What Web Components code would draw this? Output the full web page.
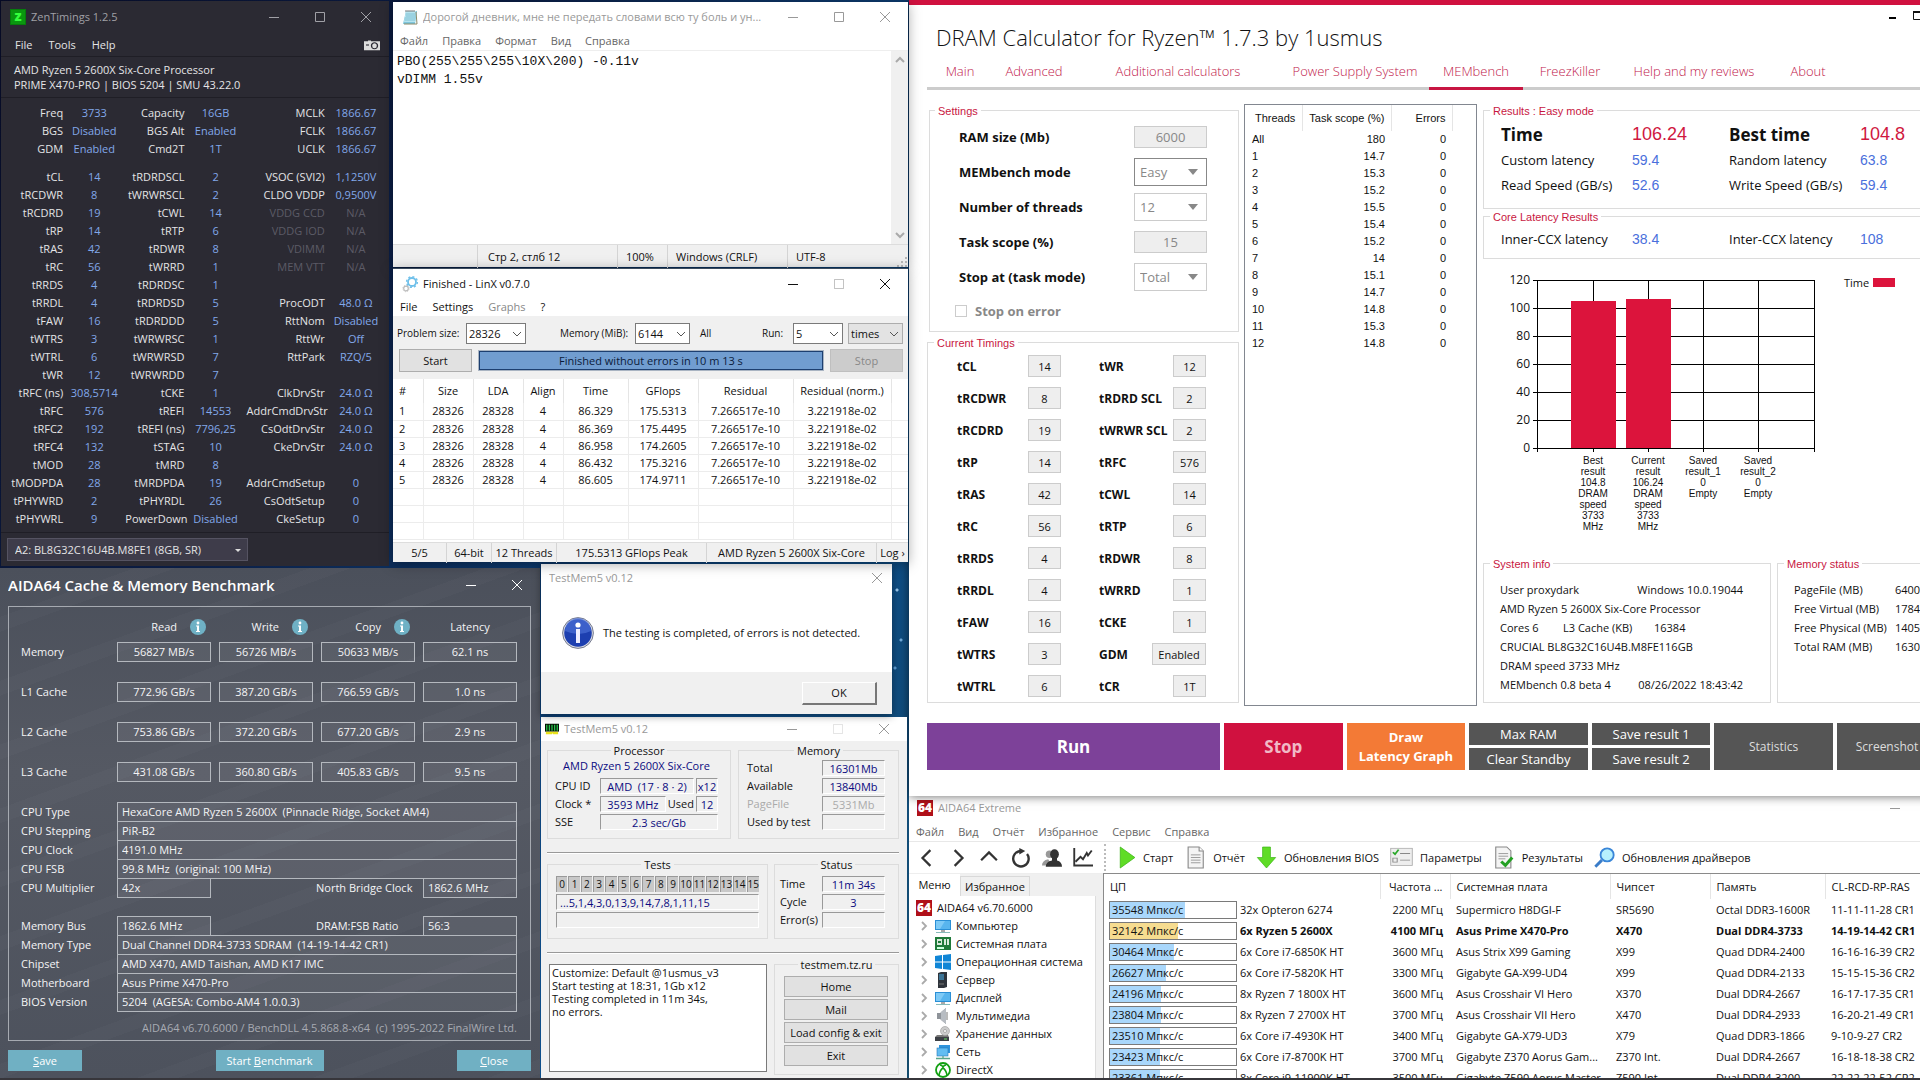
<!DOCTYPE html>
<html lang="ru">
<head>
<meta charset="utf-8">
<title>Desktop</title>
<style>
    html, body {
        height: 100%;
        margin: 0;
        overflow: hidden;
    }

    body {
        font: 11px/16px "Open Sans", "Noto Sans", sans-serif;
        color: #111;
    }
</style>
</head>
<body>
<desk-top>
    <zen-timings></zen-timings>
    <aida-extreme></aida-extreme>
    <dram-calculator></dram-calculator>
    <cache-benchmark></cache-benchmark>
    <note-pad></note-pad>
    <test-mem></test-mem>
    <test-dialog></test-dialog>
    <linx-window></linx-window>
</desk-top>

<script>
const RESET = `
    *, *::before, *::after { box-sizing: border-box; }
    button, input, select, textarea {
        font: inherit;
        color: inherit;
        margin: 0;
        padding: 0;
        border: 0;
        border-radius: 0;
        background: none;
        outline: none;
    }
    table { border-collapse: collapse; table-layout: fixed; }
    th, td { padding: 0; font-weight: inherit; text-align: inherit; white-space: nowrap; }
    svg { display: block; flex: none; overflow: visible; }
`;

const ICONS = {
    zen: '<rect width="16" height="16" fill="#067d0c"/><rect x="1" y="1" width="14" height="14" fill="#0a970f"/><text x="8" y="12" text-anchor="middle" font-size="14" font-weight="800" fill="#35ff3c">z</text>',
    camera: '<path d="M0 3h4V2h3v1h9v12H0z" fill="#ddd"/><ellipse cx="10.500" cy="9" rx="3" ry="4" fill="none" stroke="#2b2a33" stroke-width="1.300"/><path d="M2 8h3" stroke="#2b2a33" stroke-width="1.500"/>',
    notepad: '<path d="M4 2h11l-2 13H1z" fill="#7fc6dc"/><path d="M4 2h10l-1 11H2z" fill="#b6e4ef"/><path d="M4 5h9M4 7h9M3 9h10M3 11h10" stroke="#6cb2c8" stroke-width=".7"/><path d="M4 1v2M6 1v2M8 1v2M10 1v2M12 1v2" stroke="#777"/><path d="M14 3l1 12H2" fill="none" stroke="#8a8a6a"/>',
    gears: '<circle cx="10" cy="6" r="4" fill="none" stroke="#6fc0ea" stroke-width="1.8"/><circle cx="10" cy="6" r="5.4" fill="none" stroke="#6fc0ea" stroke-width="1.4" stroke-dasharray="2 2.2"/><circle cx="4" cy="12.500" r="2.300" fill="none" stroke="#bbb" stroke-width="1.200"/><circle cx="4" cy="12.500" r="3.200" fill="none" stroke="#bbb" stroke-width=".8" stroke-dasharray="1.200 1.300"/>',
    memory: '<path d="M0 2h16v9H0z" fill="#041004"/><path d="M2 3v7M5 3v7M8 3v7M11 3v7M14 3v7" stroke="#27c04b" stroke-width="1.500"/><path d="M1 11h14v3H9v-1H8v1H1z" fill="#e9e21b"/>',
    info: '<circle cx="8" cy="8" r="7.700" fill="#d9dbe4" stroke="#777c90" stroke-width=".5"/><circle cx="8" cy="8" r="6.900" fill="#1d3fb0"/><path d="M1.500 7a6.500 6.500 0 0 1 13 0q-6 3-13 0z" fill="#4a6fd6" opacity=".7"/><circle cx="8" cy="4" r="1.300" fill="#fff"/><rect x="7" y="6" width="2" height="7" fill="#eef"/>',
    hint: '<circle cx="8" cy="8" r="8" fill="#6fb1c5"/><circle cx="8" cy="4" r="1.400" fill="#fff"/><path d="M6 6.500h3V12h1v1H6v-1h1V7.500H6z" fill="#fff"/>',
    aida: '<rect width="16" height="16" fill="#b01019"/><text x="8" y="12" text-anchor="middle" font-size="12" font-weight="800" fill="#fff">64</text>',
    back: '<path d="M11 1L4 8l7 7" fill="none" stroke="#333" stroke-width="2"/>',
    forward: '<path d="M5 1l7 7-7 7" fill="none" stroke="#333" stroke-width="2"/>',
    up: '<path d="M1 10l7-7 7 7" fill="none" stroke="#333" stroke-width="2"/>',
    reload: '<path d="M13.500 5A6.500 6.500 0 1 1 8 2.500" fill="none" stroke="#333" stroke-width="2"/><path d="M7 0l5 2.500-5 3z" fill="#333"/>',
    users: '<circle cx="6" cy="5" r="3" fill="#999"/><path d="M0 14q0-4 5-5l3 5z" fill="#999"/><ellipse cx="10" cy="5" rx="3.500" ry="4" fill="#333"/><path d="M3 15q0-4 5-5V8h4v2q4 1 4 5z" fill="#333"/>',
    graph: '<path d="M1 0v14h15" fill="none" stroke="#333" stroke-width="1.500"/><path d="M2 11l4-4 2 2 3-5 1 2 3-4" fill="none" stroke="#333" stroke-width="1.500"/>',
    play: '<path d="M2 0l13 8-13 8z" fill="#5fdc26" stroke="#38b312" stroke-width=".6"/>',
    page: '<path d="M3 0h8l3 3v13H3z" fill="#f4f4f4" stroke="#888" stroke-width=".8"/><path d="M11 0v3h3" fill="#fff" stroke="#888" stroke-width=".8"/><path d="M5 6h7M5 8h7M5 10h7M5 12h7" stroke="#999" stroke-width=".7"/>',
    download: '<path d="M5 0h6v8h4l-7 8-7-8h4z" fill="#5fdc26" stroke="#38b312" stroke-width=".5"/>',
    options: '<rect x=".5" y="1" width="15" height="13" fill="#eee" stroke="#aaa" stroke-width=".6"/><path d="M2 8.500h3v3H2zM7 5h7M7 10h7" fill="none" stroke="#888" stroke-width=".7"/><path d="M2 4l1.500 1.500L6 2" fill="none" stroke="#2aa82a" stroke-width="1.300"/>',
    results: '<path d="M2 0h8l3 3v13H2z" fill="#f4f4f4" stroke="#888" stroke-width=".8"/><path d="M4 5h7M4 7h7M4 9h5" stroke="#999" stroke-width=".7"/><path d="M6 11l3 3 5-6" fill="none" stroke="#23a023" stroke-width="2.200"/>',
    magnifier: '<path d="M1 15l5-5" stroke="#3a7cc8" stroke-width="2.200"/><circle cx="10" cy="6" r="5" fill="#b7f1fd" stroke="#3a86d8" stroke-width="1.400"/>',
    monitor: '<rect x="0" y="2" width="16" height="10" fill="#2a8fd6"/><path d="M1 3h14v8H1z" fill="#58b5ee"/><path d="M1 3h9l-5 8H1z" fill="#7ecaf6"/><path d="M6 12h4v2H6z" fill="#aaa"/><path d="M1 14.500h14" stroke="#8bb" />',
    board: '<rect y="1" width="16" height="13" fill="#1f7a3a"/><path d="M2 3h5v6H2zM9 3h2v6H9zM12 3h2v6h-2z" fill="#d9eadb"/><path d="M3 5h3v2H3z" fill="#1f7a3a"/><path d="M2 11h7v2H2z" fill="#cfd"/>',
    windows: '<path d="M0 2l7-1v6.500H0zM8 1l8-1v7.500H8zM0 8.500h7V15l-7-1zM8 8.500h8V16l-8-1z" fill="#1086d6"/>',
    server: '<path d="M3 1l3-1h6v15l-3 1H3z" fill="#2f343b"/><path d="M4 3h5M4 5h5M4 7h5" stroke="#4bb3f0"/><path d="M4 12h5" stroke="#777"/>',
    speaker: '<path d="M2 5h3l6-5v16l-6-5H2z" fill="#8f949a"/><path d="M6 4l5-4v16l-5-4z" fill="#b7bcc2"/><path d="M12 4v8" stroke="#777"/>',
    disk: '<path d="M0 11h14v4H0z" fill="#3c4046"/><path d="M2 9h11l1 2H0z" fill="#777"/><circle cx="10" cy="5" r="4.500" fill="#ccc" stroke="#999" stroke-width=".6"/><circle cx="10" cy="5" r="1.500" fill="#fff" stroke="#888" stroke-width=".6"/><path d="M9 13h3" stroke="#6d6"/>',
    network: '<rect x="4" y="1" width="11" height="8" fill="#2f94dc"/><rect x="2" y="4" width="11" height="8" fill="#62bdf2" stroke="#2579b8" stroke-width=".6"/><path d="M1 14.500h14M8 12v2" stroke="#59a58a" stroke-width="1.300"/>',
    directx: '<circle cx="8" cy="8" r="7" fill="#fff" stroke="#12a012" stroke-width="1.800"/><path d="M4 13q1-5 4-7 3 2 4 7M5 3q2 0 3 2 1-2 3-2" fill="none" stroke="#12a012" stroke-width="1.600"/>',
    chevron: '<path d="M6 4l4 4-4 4" fill="none" stroke="#aaa" stroke-width="1.800"/>'
};

const icon = (name, width = 16, height = width) =>
    `<svg width="${width}" height="${height}" viewBox="0 0 16 16" preserveAspectRatio="none" aria-hidden="true">${ICONS[name]}</svg>`;

class BaseElement extends HTMLElement {
    connectedCallback () {
        if (this.shadowRoot) {
            return;
        }
        const template = document.createElement('template');
        template.innerHTML = `<style>${RESET}</style>${this.render()}`;
        this.attachShadow({ mode: 'open' }).appendChild(template.content.cloneNode(true));
    }
}

/* ---------- shared parts ---------- */

class DeskTop extends BaseElement {
    render () {
        return `
            <style>
                :host {
                    display: block;
                    box-sizing: border-box;
                    position: relative;
                    height: 100%;
                    overflow: hidden;
                    background:
                        radial-gradient(circle at 897px 590px, #9cc9ee 1px, transparent 2px),
                        radial-gradient(circle at 901px 640px, #74aede 1px, transparent 2px),
                        radial-gradient(circle at 895px 668px, #5f9fd6 1px, transparent 2px),
                        linear-gradient(120deg, #060a24 0, #0b1d44 20%, #0e4f8c 45%, #1a4a58 70%, #2e3338);
                    border-bottom: 2px solid #37363b;
                }
                /* windows are placed freely on the desktop */
                ::slotted(*) { position: absolute; }
                ::slotted(zen-timings) { left: 1px; top: 1px; width: 388px; }
                ::slotted(note-pad) { left: 393px; top: 2px; width: 515px; height: 265px; }
                ::slotted(linx-window) { left: 393px; top: 268px; width: 515px; }
                ::slotted(cache-benchmark) { left: 0; top: 568px; width: 540px; bottom: 0; }
                ::slotted(test-dialog) { left: 541px; top: 564px; width: 351px; }
                ::slotted(test-mem) { left: 541px; top: 717px; width: 366px; bottom: 0; }
                ::slotted(dram-calculator) { left: 909px; top: 0; right: -35px; height: 791px; }
                ::slotted(aida-extreme) { left: 909px; top: 793px; right: -90px; bottom: 0; }
            </style>
            <slot></slot>
        `;
    }
}

class TitleBar extends BaseElement {
    render () {
        const shapes = {
            min: '<path d="M0 5.500h10"/>',
            max: '<path d="M.5.5h9v9h-9z"/>',
            off: '<path d="M.5.5h9v9h-9z" opacity=".25"/>',
            close: '<path d="M0 0l10 10M10 0L0 10"/>'
        };
        const names = { min: 'Minimize', max: 'Maximize', off: 'Maximize', close: 'Close' };
        const buttons = (this.getAttribute('controls') || 'min max close').split(' ').map(key => `
            <button aria-label="${names[key]}" ${key === 'off' ? 'disabled' : ''}>
                <svg width="10" height="10" fill="none" stroke="currentColor">${shapes[key]}</svg>
            </button>`).join('');
        return `
            <style>
                :host {
                    display: flex;
                    align-items: center;
                    height: 30px;
                    padding-left: 9px;
                    gap: 5px;
                    color: #999;
                }
                span { flex: 1; min-width: 0; white-space: nowrap; overflow: hidden; text-overflow: ellipsis; }
                nav { display: flex; align-self: stretch; color: var(--control-color, inherit); }
                button {
                    width: var(--control-width, 46px);
                    display: grid;
                    place-items: center;
                }
            </style>
            <slot></slot>
            <span>${this.getAttribute('label')}</span>
            <nav>${buttons}</nav>
        `;
    }
}

class MenuBar extends BaseElement {
    render () {
        const off = this.getAttribute('off');
        return `
            <style>
                :host { display: flex; align-items: center; gap: 14px; padding: 0 7px; height: 18px; }
                button { white-space: nowrap; }
                button:disabled { color: #888; }
            </style>
            ${this.getAttribute('items').split('|').map(item =>
                `<button ${item === off ? 'disabled' : ''}>${item}</button>`).join('')}
            <slot></slot>
        `;
    }
}

class GroupBox extends BaseElement {
    render () {
        return `
            <style>
                :host { display: block; }
                fieldset {
                    height: 100%;
                    min-width: 0;
                    margin: 0;
                    padding: 0;
                    border: 1px solid #dcdcdc;
                }
                legend {
                    margin: var(--legend-margin, 0 6px);
                    padding: 1px 3px 0;
                    line-height: 14px;
                    color: var(--legend-color, #111);
                }
            </style>
            <fieldset>
                <legend>${this.getAttribute('label')}</legend>
                <slot></slot>
            </fieldset>
        `;
    }
}

class ComboBox extends BaseElement {
    render () {
        const arrows = {
            solid: '<path d="M0 2h10L5 8z" fill="currentColor"/>',
            tiny: '<path d="M2 4h6L5 7z" fill="currentColor"/>',
            open: '<path d="M1 3l4 4 4-4" fill="none" stroke="currentColor"/>'
        };
        return `
            <style>
                :host {
                    display: grid;
                    align-items: center;
                    border: 1px solid #7a7a7a;
                    background: #fff;
                }
                select, svg { grid-area: 1 / 1; }
                select {
                    appearance: none;
                    width: 100%;
                    height: 100%;
                    min-width: 0;
                    padding-left: var(--combo-indent, 2px);
                    opacity: 1;
                }
                svg {
                    justify-self: end;
                    margin-right: var(--combo-arrow, 3px);
                    color: var(--arrow-color, #555);
                    pointer-events: none;
                }
            </style>
            <select aria-label="${this.getAttribute('label')}" ${this.hasAttribute('disabled') ? 'disabled' : ''}>
                <option>${this.getAttribute('value')}</option>
            </select>
            <svg width="10" height="10" viewBox="0 0 10 10">${arrows[this.getAttribute('arrow') || 'open']}</svg>
        `;
    }
}

/* ---------- ZenTimings ---------- */

class ZenTimings extends BaseElement {
    render () {
        const rows = [
            'Freq|3733|Capacity|16GB|MCLK|1866.67',
            'BGS|Disabled|BGS Alt|Enabled|FCLK|1866.67',
            'GDM|Enabled|Cmd2T|1T|UCLK|1866.67',
            '',
            'tCL|14|tRDRDSCL|2|VSOC (SVI2)|1,1250V',
            'tRCDWR|8|tWRWRSCL|2|CLDO VDDP|0,9500V',
            'tRCDRD|19|tCWL|14|VDDG CCD|N/A',
            'tRP|14|tRTP|6|VDDG IOD|N/A',
            'tRAS|42|tRDWR|8|VDIMM|N/A',
            'tRC|56|tWRRD|1|MEM VTT|N/A',
            'tRRDS|4|tRDRDSC|1||',
            'tRRDL|4|tRDRDSD|5|ProcODT|48.0 Ω',
            'tFAW|16|tRDRDDD|5|RttNom|Disabled',
            'tWTRS|3|tWRWRSC|1|RttWr|Off',
            'tWTRL|6|tWRWRSD|7|RttPark|RZQ/5',
            'tWR|12|tWRWRDD|7||',
            'tRFC (ns)|308,5714|tCKE|1|ClkDrvStr|24.0 Ω',
            'tRFC|576|tREFI|14553|AddrCmdDrvStr|24.0 Ω',
            'tRFC2|192|tREFI (ns)|7796,25|CsOdtDrvStr|24.0 Ω',
            'tRFC4|132|tSTAG|10|CkeDrvStr|24.0 Ω',
            'tMOD|28|tMRD|8||',
            'tMODPDA|28|tMRDPDA|19|AddrCmdSetup|0',
            'tPHYWRD|2|tPHYRDL|26|CsOdtSetup|0',
            'tPHYWRL|9|PowerDown|Disabled|CkeSetup|0'
        ];
        const body = rows.map(row => {
            if (!row) {
                return '<tr class="space"><td colspan="6"></td></tr>';
            }
            const cells = row.split('|');
            return '<tr>' + cells.map((cell, i) => {
                const off = i > 3 && cells[5] === 'N/A' ? ' class="off"' : '';
                return i % 2 ? `<td${off}>${cell}</td>` : `<th${off}>${cell}</th>`;
            }).join('') + '</tr>';
        }).join('');
        return `
            <style>
                :host { display: block; background: #2b2a33; color: #e4e4e6; }
                title-bar { height: 32px; color: #a0a0a6; }
                menu-bar { height: 24px; gap: 16px; padding: 0 9px 0 14px; border-bottom: 1px solid #1f1e26; }
                menu-bar button { margin-left: auto; }
                p { margin: 0; padding: 5px 13px; line-height: 15px; border-bottom: 1px solid #1f1e26; }
                table { width: 386px; margin: 6px 0 4px; }
                td, th { height: 18px; line-height: 18px; }
                th { text-align: right; }
                td { text-align: center; color: #82a8ea; }
                .off { color: #5c5b66; }
                .space td { height: 10px; }
                footer { padding: 5px 6px; border-top: 1px solid #1f1e26; }
                combo-box {
                    width: 241px;
                    height: 23px;
                    background: #3e3c4a;
                    border-color: #555362;
                    --combo-indent: 7px;
                    --combo-arrow: 4px;
                    --arrow-color: #ddd;
                }
            </style>
            <title-bar label="ZenTimings 1.2.5">${icon('zen')}</title-bar>
            <menu-bar items="File|Tools|Help"><button aria-label="Screenshot">${icon('camera', 16, 12)}</button></menu-bar>
            <p>AMD Ryzen 5 2600X Six-Core Processor<br>PRIME X470-PRO | BIOS 5204 | SMU 43.22.0</p>
            <table>
                <colgroup>
                    <col style="width:62px"><col style="width:62px"><col style="width:59px">
                    <col style="width:62px"><col style="width:78px"><col style="width:62px">
                </colgroup>
                ${body}
            </table>
            <footer><combo-box arrow="tiny" label="Module" value="A2: BL8G32C16U4B.M8FE1 (8GB, SR)"></combo-box></footer>
        `;
    }
}

/* ---------- Notepad ---------- */

class NotePad extends BaseElement {
    render () {
        return `
            <style>
                :host { display: flex; flex-direction: column; background: #fff; box-shadow: 0 2px 12px rgba(0, 0, 0, .35); }
                menu-bar { height: 19px; color: #666; border-bottom: 1px solid #eee; }
                main { flex: 1; display: flex; min-height: 0; }
                textarea {
                    flex: 1;
                    resize: none;
                    overflow: hidden;
                    padding: 2px 4px;
                    font: 13px/18px "Liberation Mono", monospace;
                }
                aside {
                    width: 17px;
                    padding: 6px 0;
                    background: #f0f0f0;
                    color: #aaa;
                    display: flex;
                    flex-direction: column;
                    align-items: center;
                    justify-content: space-between;
                }
                footer {
                    display: grid;
                    grid-template-columns: 85px 140px 50px 120px 1fr;
                    height: 23px;
                    line-height: 23px;
                    background: #f0f0f0;
                    border-top: 1px solid #ddd;
                }
                footer span { border-right: 1px solid #d4d4d4; padding-left: 8px; }
                footer span:nth-child(2) { padding-left: 10px; }
                footer span:last-child { border: 0; display: flex; justify-content: space-between; align-items: end; }
            </style>
            <title-bar label="Дорогой дневник, мне не передать словами всю ту боль и ун...">${icon('notepad')}</title-bar>
            <menu-bar items="Файл|Правка|Формат|Вид|Справка"></menu-bar>
            <main>
                <textarea aria-label="Текст" spellcheck="false">PBO(255\\255\\255\\10X\\200) -0.11v
vDIMM 1.55v</textarea>
                <aside>
                    <svg width="8" height="6" fill="none" stroke="currentColor" stroke-width="2"><path d="M0 5l4-4 4 4"/></svg>
                    <svg width="8" height="6" fill="none" stroke="currentColor" stroke-width="2"><path d="M0 1l4 4 4-4"/></svg>
                </aside>
            </main>
            <footer>
                <span></span><span>Стр 2, стлб 12</span><span>100%</span><span>Windows (CRLF)</span>
                <span>UTF-8 <svg width="11" height="11" fill="#b8b8b8"><path d="M8 0h2v2H8zM8 4h2v2H8zM4 4h2v2H4zM8 8h2v2H8zM4 8h2v2H4zM0 8h2v2H0z"/></svg></span>
            </footer>
        `;
    }
}

/* ---------- LinX ---------- */

class LinxWindow extends BaseElement {
    render () {
        const runs = [
            ['86.329', '175.5313'],
            ['86.369', '175.4495'],
            ['86.958', '174.2605'],
            ['86.432', '175.3216'],
            ['86.605', '174.9711']
        ];
        const body = runs.map(([time, gflops], i) => `
            <tr><td>${i + 1}</td><td>28326</td><td>28328</td><td>4</td><td>${time}</td><td>${gflops}</td>
            <td>7.266517e-10</td><td>3.221918e-02</td><td></td></tr>`).join('');
        const empty = `<tr>${'<td></td>'.repeat(9)}</tr>`.repeat(3);
        return `
            <style>
                :host {
                    display: block;
                    background: #fff;
                    border-top: 1px solid #3a4a5c;
                    box-shadow: 0 2px 12px rgba(0, 0, 0, .35);
                }
                title-bar, menu-bar { color: #111; }
                title-bar { height: 29px; }
                menu-bar { height: 18px; gap: 15px; }
                form {
                    padding: 7px 6px;
                    background: #f0f0f0;
                    display: grid;
                    gap: 5px;
                }
                form div { display: flex; }
                label { line-height: 20px; font-size: 10px; margin-left: -2px; }
                combo-box { height: 21px; }
                .actions { gap: 6px; height: 23px; }
                .actions button { width: 73px; background: #e1e1e1; border: 1px solid #adadad; }
                .actions button:disabled { background: #ccc; border-color: #bfbfbf; color: #888; }
                .progress {
                    flex: 1;
                    display: block;
                    text-align: center;
                    line-height: 17px;
                    background: #719dd0;
                    border: 1px solid #1d3f70;
                    outline: 1px solid #a9b4c2;
                    margin: 2px 1px;
                    color: #0b1b3a;
                }
                table { width: 100%; text-align: center; line-height: 16px; }
                th { height: 24px; border-right: 1px solid #e5e5e5; }
                td { height: 17px; border-right: 1px solid #ececec; border-bottom: 1px solid #ececec; }
                tr > :first-child { text-align: left; padding-left: 6px; }
                tr > :last-child { border-right: 0; }
                footer {
                    display: grid;
                    grid-template-columns: 54px 45px 65px 150px 170px 1fr;
                    height: 20px;
                    margin-top: 2px;
                    line-height: 20px;
                    text-align: center;
                    background: #f0f0f0;
                    border-top: 1px solid #ddd;
                }
                footer span { border-right: 1px solid #d4d4d4; white-space: nowrap; }
                footer span:last-child { border: 0; }
            </style>
            <title-bar label="Finished - LinX v0.7.0" controls="min off close">${icon('gears')}</title-bar>
            <menu-bar items="File|Settings|Graphs|?" off="Graphs"></menu-bar>
            <form>
                <div>
                    <label style="width:69px">Problem size:</label>
                    <combo-box style="width:60px" label="Problem size" value="28326"></combo-box>
                    <label style="width:75px; margin-left:34px">Memory (MiB):</label>
                    <combo-box style="width:55px" label="Memory" value="6144"></combo-box>
                    <label style="width:64px; margin-left:10px">All</label>
                    <label style="width:31px">Run:</label>
                    <combo-box style="width:50px" label="Run" value="5"></combo-box>
                    <combo-box style="width:55px; margin-left:5px; background:#e3e3e3; border-color:#adadad" label="Run unit" value="times"></combo-box>
                </div>
                <div class="actions">
                    <button type="button">Start</button>
                    <div class="progress" role="progressbar">Finished without errors in 10 m 13 s</div>
                    <button type="button" disabled>Stop</button>
                </div>
            </form>
            <table>
                <colgroup>
                    <col style="width:30px"><col style="width:50px"><col style="width:50px"><col style="width:40px">
                    <col style="width:65px"><col style="width:70px"><col style="width:95px"><col style="width:98px"><col>
                </colgroup>
                <tr><th>#</th><th>Size</th><th>LDA</th><th>Align</th><th>Time</th><th>GFlops</th>
                <th>Residual</th><th>Residual (norm.)</th><th></th></tr>
                ${body}${empty}
            </table>
            <footer>
                <span>5/5</span><span>64-bit</span><span>12 Threads</span><span>175.5313 GFlops Peak</span>
                <span>AMD Ryzen 5 2600X Six-Core</span><span>Log ›</span>
            </footer>
        `;
    }
}

/* ---------- AIDA64 Cache & Memory Benchmark ---------- */

class CacheBenchmark extends BaseElement {
    render () {
        const speeds = [
            ['Memory', '56827 MB/s', '56726 MB/s', '50633 MB/s', '62.1 ns'],
            ['L1 Cache', '772.96 GB/s', '387.20 GB/s', '766.59 GB/s', '1.0 ns'],
            ['L2 Cache', '753.86 GB/s', '372.20 GB/s', '677.20 GB/s', '2.9 ns'],
            ['L3 Cache', '431.08 GB/s', '360.80 GB/s', '405.83 GB/s', '9.5 ns']
        ];
        const details = [
            ['CPU Type', 'HexaCore AMD Ryzen 5 2600X&nbsp; (Pinnacle Ridge, Socket AM4)'],
            ['CPU Stepping', 'PiR-B2'],
            ['CPU Clock', '4191.0 MHz'],
            ['CPU FSB', '99.8 MHz&nbsp; (original: 100 MHz)'],
            ['CPU Multiplier', '42x', 'North Bridge Clock', '1862.6 MHz'],
            [],
            ['Memory Bus', '1862.6 MHz', 'DRAM:FSB Ratio', '56:3'],
            ['Memory Type', 'Dual Channel DDR4-3733 SDRAM&nbsp; (14-19-14-42 CR1)'],
            ['Chipset', 'AMD X470, AMD Taishan, AMD K17 IMC'],
            ['Motherboard', 'Asus Prime X470-Pro'],
            ['BIOS Version', '5204&nbsp; (AGESA: Combo-AM4 1.0.0.3)']
        ];
        const box = (value, name, cls = '') =>
            `<input class="${cls}" readonly aria-label="${name}" value="${value}">`;
        return `
            <style>
                :host {
                    display: block;
                    color: #f4f4f6;
                    background:
                        repeating-linear-gradient(160deg, transparent 0 46px, rgba(255, 255, 255, .02) 46px 60px),
                        linear-gradient(#4b505b, #555963 40%, #4d525d);
                }
                title-bar {
                    height: 34px;
                    padding-left: 8px;
                    gap: 0;
                    font-size: 15px;
                    font-weight: 600;
                    color: #fff;
                }
                main {
                    height: 435px;
                    margin: 4px 9px 0 8px;
                    padding: 12px 13px 0 12px;
                    border: 1px solid #a6aab1;
                }
                .head, .speed {
                    display: grid;
                    grid-template-columns: 88px repeat(4, 1fr);
                    gap: 8px;
                    height: 20px;
                    line-height: 20px;
                    margin-bottom: 20px;
                }
                .head { height: 16px; line-height: 16px; margin-bottom: 7px; text-align: center; }
                .head span { display: flex; justify-content: end; align-items: center; gap: 13px; padding-right: 5px; }
                .head span:last-child { justify-content: center; padding: 0; }
                input {
                    min-width: 0;
                    height: 20px;
                    padding: 0 4px;
                    border: 1px solid #b4b8be;
                    background: rgba(255, 255, 255, .06);
                }
                .speed input { text-align: center; }
                .detail {
                    display: grid;
                    grid-template-columns: 96px 94px 105px 107px 1fr;
                    height: 19px;
                    line-height: 20px;
                }
                .detail .wide { grid-column: 2 / -1; }
                .detail .second { grid-column: 4; }
                .version { margin: 9px 0 0; text-align: right; color: #a8abb3; }
                footer {
                    display: flex;
                    justify-content: space-between;
                    padding: 9px 9px 7px 8px;
                }
                footer button { height: 21px; width: 74px; background: #70b0c3; color: #fff; }
                footer button:nth-child(2) { width: 108px; }
            </style>
            <title-bar label="AIDA64 Cache &amp; Memory Benchmark" controls="min close"></title-bar>
            <main>
                <div class="head">
                    <b></b>
                    <span>Read ${icon('hint')}</span><span>Write ${icon('hint')}</span>
                    <span>Copy ${icon('hint')}</span><span>Latency</span>
                </div>
                ${speeds.map(([name, ...values]) => `
                    <div class="speed"><span>${name}</span>${values.map(value => box(value, name)).join('')}</div>`).join('')}
                ${details.map(([name, value, name2, value2]) => !name ? '<div class="detail"></div>' : `
                    <div class="detail">
                        <span>${name}</span>${box(value, name, value2 ? '' : 'wide')}
                        ${value2 ? `<span class="second">${name2}</span>${box(value2, name2)}` : ''}
                    </div>`).join('')}
                <p class="version">AIDA64 v6.70.6000 / BenchDLL 4.5.868.8-x64&nbsp; (c) 1995-2022 FinalWire Ltd.</p>
            </main>
            <footer>
                <button><u>S</u>ave</button><button>Start <u>B</u>enchmark</button><button><u>C</u>lose</button>
            </footer>
        `;
    }
}

/* ---------- TestMem5 ---------- */

class TestDialog extends BaseElement {
    render () {
        return `
            <style>
                :host { display: block; background: #fff; box-shadow: 0 2px 8px rgba(0, 0, 0, .4); }
                title-bar { height: 28px; padding-left: 8px; gap: 0; --control-width: 31px; }
                main { display: flex; align-items: center; gap: 9px; height: 80px; padding: 2px 21px 0; }
                footer { display: flex; justify-content: end; padding: 10px 15px 9px; background: #f0f0f0; }
                button {
                    width: 75px;
                    height: 23px;
                    border: 1px solid #fff;
                    border-right: 2px solid #777;
                    border-bottom: 2px solid #777;
                    background: #f0f0f0;
                }
            </style>
            <title-bar label="TestMem5 v0.12" controls="close"></title-bar>
            <main>${icon('info', 32)}<span>The testing is completed, of errors is not detected.</span></main>
            <footer><button>OK</button></footer>
        `;
    }
}

class TestMem extends BaseElement {
    render () {
        const cells = Array.from({ length: 16 }, (_, i) => `<span>${i}</span>`).join('');
        return `
            <style>
                :host { display: block; background: #f0f0f0; --legend-margin: 0 auto; }
                title-bar { height: 24px; padding-left: 4px; background: #fff; }
                main { padding: 2px 8px 0 6px; }
                .row { display: grid; grid-template-columns: 184px 1fr; gap: 7px; }
                .row.low { grid-template-columns: 221px 1fr; gap: 6px; }
                hr { margin: 13px 0 3px; border: 0; height: 2px; background: #fff; border-top: 1px solid #999; }
                .cpu, .mem, .tests, .state { display: grid; gap: 2px; line-height: 16px; white-space: nowrap; }
                .cpu { padding: 0 12px 8px 7px; }
                .cpu p { margin: 0 0 2px; text-align: center; color: #0b0b80; }
                .cpu div { display: flex; gap: 2px; }
                .cpu div > :first-child { width: 43px; }
                .mem div, .state div { display: flex; justify-content: space-between; }
                .mem { padding: 2px 13px 0 8px; }
                .state { padding: 4px 13px 10px 5px; }
                .tests { padding: 4px 8px 10px; }
                output {
                    display: block;
                    height: 16px;
                    line-height: 15px;
                    text-align: center;
                    color: #0b0b80;
                    border: 1px solid #999;
                    border-right-color: #fff;
                    border-bottom-color: #fff;
                }
                .mem output, .state output { width: 63px; }
                .grow { flex: 1; }
                .small { width: 22px; }
                .off, .mem output.off { color: #aaa; }
                .tests output { text-align: left; padding-left: 3px; }
                .cells { display: grid; grid-template-columns: repeat(16, 1fr); gap: 1px; height: 16px; text-align: center; }
                .cells span { background: #c8c8c8; border-left: 1px solid #999; border-top: 1px solid #999; line-height: 15px; font-size: 10px; }
                textarea {
                    height: 108px;
                    margin: 7px 1px 0 2px;
                    padding: 1px 2px;
                    border: 1px solid #7a7a7a;
                    background: #fff;
                    resize: none;
                    line-height: 13px;
                }
                .links { display: grid; gap: 2px; padding: 4px 10px 8px 9px; }
                .links button { height: 21px; background: #e1e1e1; border: 1px solid #adadad; white-space: nowrap; }
            </style>
            <title-bar label="TestMem5 v0.12" controls="min off close">${icon('memory', 14)}</title-bar>
            <main>
                <div class="row">
                    <group-box label="Processor">
                        <div class="cpu">
                            <p>AMD Ryzen 5 2600X Six-Core</p>
                            <div><span>CPU ID</span><output class="grow">AMD&nbsp; (17 · 8 · 2)</output><output class="small">x12</output></div>
                            <div><span>Clock *</span><output class="grow">3593 MHz</output><span>Used</span><output class="small">12</output></div>
                            <div><span>SSE</span><output class="grow">2.3 sec/Gb</output></div>
                        </div>
                    </group-box>
                    <group-box label="Memory">
                        <div class="mem">
                            <div><span>Total</span><output>16301Mb</output></div>
                            <div><span>Available</span><output>13840Mb</output></div>
                            <div class="off"><span>PageFile</span><output class="off">5331Mb</output></div>
                            <div><span>Used by test</span><output></output></div>
                        </div>
                    </group-box>
                </div>
                <hr>
                <div class="row low">
                    <group-box label="Tests">
                        <div class="tests">
                            <div class="cells">${cells}</div>
                            <output>...5,1,4,3,0,13,9,14,7,8,1,11,15</output>
                            <output></output>
                        </div>
                    </group-box>
                    <group-box label="Status">
                        <div class="state">
                            <div><span>Time</span><output>11m 34s</output></div>
                            <div><span>Cycle</span><output>3</output></div>
                            <div><span>Error(s)</span><output></output></div>
                        </div>
                    </group-box>
                </div>
                <hr>
                <div class="row low">
                    <textarea readonly aria-label="Log">Customize: Default @1usmus_v3
Start testing at 18:31, 1Gb x12
Testing completed in 11m 34s,
no errors.</textarea>
                    <group-box label="testmem.tz.ru">
                        <div class="links">
                            <button>Home</button><button>Mail</button><button>Load config &amp; exit</button><button>Exit</button>
                        </div>
                    </group-box>
                </div>
            </main>
        `;
    }
}

/* ---------- DRAM Calculator ---------- */

class ResultChart extends BaseElement {
    render () {
        const left = 54;
        const top = 21;
        const step = 28;
        const bottom = top + step * 6;
        const columns = [110, 165, 220, 275];
        const results = [104.8, 106.24];
        const labels = [
            ['Best', 'result', '104.8', 'DRAM', 'speed', '3733', 'MHz'],
            ['Current', 'result', '106.24', 'DRAM', 'speed', '3733', 'MHz'],
            ['Saved', 'result_1', '0', 'Empty'],
            ['Saved', 'result_2', '0', 'Empty']
        ];
        let out = '';
        for (let i = 0; i <= 6; i++) {
            const y = top + step * i;
            out += `<path d="M${left - 4} ${y + 0.5}H332"/><text class="value" x="47" y="${y + 4}">${120 - i * 20}</text>`;
        }
        [left, ...columns, 331].forEach(x => {
            out += `<path d="M${x + 0.5} ${top}V${bottom + 4}"/>`;
        });
        results.forEach((value, i) => {
            const height = Math.round(value * step / 20);
            out += `<rect x="${columns[i] - 22}" y="${bottom - height}" width="45" height="${height}"/>`;
        });
        labels.forEach((lines, i) => {
            lines.forEach((line, n) => {
                out += `<text class="name" x="${columns[i]}" y="${bottom + 16 + n * 11}">${line}</text>`;
            });
        });
        return `
            <style>
                :host { display: block; }
                path { stroke: #000; fill: none; }
                rect { fill: #dc143c; }
                text { fill: #111; }
                .value { font: 12px "Open Sans", sans-serif; text-anchor: end; }
                .name { font: 10px "Liberation Sans", sans-serif; text-anchor: middle; }
            </style>
            <svg width="430" height="297">
                ${out}
                <text x="361" y="28" font-size="11">Time</text>
                <rect x="390" y="19" width="22" height="9"/>
            </svg>
        `;
    }
}

class DramCalculator extends BaseElement {
    render () {
        const tabs = [
            ['Main', 66], ['Advanced', 82], ['Additional calculators', 206], ['Power Supply System', 148],
            ['MEMbench', 94], ['FreezKiller', 94], ['Help and my reviews', 154], ['About', 74]
        ];
        const scope = [180, 14.7, 15.3, 15.2, 15.5, 15.4, 15.2, 14, 15.1, 14.7, 14.8, 15.3, 14.8];
        const timings = [
            'tCL|14|tWR|12', 'tRCDWR|8|tRDRD SCL|2', 'tRCDRD|19|tWRWR SCL|2', 'tRP|14|tRFC|576',
            'tRAS|42|tCWL|14', 'tRC|56|tRTP|6', 'tRRDS|4|tRDWR|8', 'tRRDL|4|tWRRD|1',
            'tFAW|16|tCKE|1', 'tWTRS|3|GDM|Enabled', 'tWTRL|6|tCR|1T'
        ];
        const timing = (name, value) => `
            <label for="${name}">${name}</label>
            <input id="${name}" readonly value="${value}" class="${value === 'Enabled' ? 'long' : ''}">`;
        return `
            <style>
                :host {
                    display: block;
                    overflow: hidden;
                    background: #fff;
                    border-top: 5px solid #d0113f;
                    box-shadow: 0 0 10px rgba(0, 0, 0, .6);
                    --legend-color: #c8173f;
                }
                header { display: flex; justify-content: space-between; height: 50px; padding-left: 27px; }
                h1 { margin: 0; font-size: 22px; line-height: 64px; font-weight: 300; white-space: nowrap; }
                header div { display: flex; }
                header button { width: 25px; height: 20px; display: grid; place-items: center; }
                nav { display: flex; height: 35px; margin: 0 18px; background: linear-gradient(#ccc, #ccc) bottom / 100% 3px no-repeat; }
                nav button {
                    font-size: 13px;
                    font-weight: 300;
                    line-height: 32px;
                    padding-bottom: 3px;
                    color: #c0174a;
                    white-space: nowrap;
                }
                nav .on { border-bottom: 3px solid #c81642; padding: 0; }
                main {
                    display: grid;
                    grid-template-columns: 312px 238px 1fr;
                    padding: 13px 0 0 18px;
                    height: 616px;
                }
                group-box { font: 11px/16px "Liberation Sans", sans-serif; }
                .left { display: grid; gap: 3px; align-content: start; }
                .settings { margin-left: 2px; --legend-margin: 0 5px; }
                .settings div {
                    display: flex;
                    align-items: center;
                    justify-content: space-between;
                    height: 35px;
                    margin: 0 31px 0 29px;
                    font: 700 13px "Open Sans", sans-serif;
                }
                .settings div:first-of-type { margin-top: 1px; }
                .settings input[type=text], .settings combo-box {
                    width: 73px;
                    height: 22px;
                    border: 1px solid #ccc;
                    background: #eee;
                    text-align: center;
                    font-weight: 400;
                    color: #888;
                }
                .settings combo-box { height: 28px; background: #fff; --combo-indent: 5px; --combo-arrow: 8px; --arrow-color: #888; }
                .settings combo-box.mode { border-color: #888; }
                .settings .check { justify-content: start; gap: 8px; margin: 0 0 3px 25px; height: 34px; color: #888; }
                input[type=checkbox] { appearance: none; width: 12px; height: 12px; border: 1px solid #ccc; }
                .timings {
                    display: grid;
                    grid-template-columns: 71px 33px 38px 1fr auto;
                    align-items: center;
                    grid-auto-rows: 32px;
                    padding: 0 32px 0 29px;
                    font: 11px "Open Sans", sans-serif;
                }
                .timings label { font-size: 12px; font-weight: 700; white-space: nowrap; }
                .timings label:nth-of-type(even) { grid-column: 4; }
                .timings input { width: 33px; height: 22px; border: 1px solid #ccc; background: #eee; text-align: center; justify-self: end; }
                .timings .long { width: 54px; margin-left: -21px; }
                .list { margin: 1px 0 0 5px; width: 233px; height: 602px; border: 1px solid #828790; font: 11px/17px "Liberation Sans", sans-serif; }
                .list th { height: 26px; border-right: 1px solid #e5e5e5; }
                .list th, .list td { text-align: right; padding-right: 6px; }
                .list td { height: 17px; }
                .list tr > :first-child { text-align: left; padding-left: 7px; }
                .list tr > th:first-child { padding-left: 10px; }
                .right { margin-left: 6px; min-width: 0; }
                .values {
                    display: grid;
                    grid-template-columns: 131px 97px 131px 1fr;
                    grid-auto-rows: 25px;
                    align-items: center;
                    padding: 4px 0 11px 17px;
                    font: 13px "Open Sans", sans-serif;
                    white-space: nowrap;
                }
                .values i { font: 14px "Liberation Sans", sans-serif; color: #4a6fdc; }
                .values b { font-size: 17px; }
                .values em { font: 18px "Liberation Sans", sans-serif; color: #d0183f; }
                .core { padding: 2px 0 7px 17px; }
                .bottom { display: grid; grid-template-columns: 288px 1fr; gap: 6px; }
                .info, .status { padding: 9px 27px 8px 16px; font: 11px/19px "Open Sans", sans-serif; white-space: nowrap; }
                .info div { display: flex; justify-content: space-between; }
                .info .cores { display: grid; grid-template-columns: 63px 91px 1fr; }
                .status { display: grid; grid-template-columns: 101px 1fr; align-content: start; padding-right: 0; }
                footer {
                    display: grid;
                    grid-template-columns: 293px repeat(5, 1fr) 100px;
                    grid-template-rows: 22px 22px;
                    gap: 3px 4px;
                    padding: 17px 18px 22px;
                    color: #fff;
                }
                footer button { background: #555; font-size: 13px; line-height: 19px; white-space: nowrap; }
                footer .tall { grid-row: span 2; }
                footer .run { background: #7d4199; font-size: 17px; font-weight: 700; }
                footer .stop { background: #d0113f; color: #f0b9c6; font-size: 17px; font-weight: 700; }
                footer .draw { background: #f37a36; font-weight: 700; }
                footer .light { font-size: 12px; color: #ddd; }
            </style>
            <header>
                <h1>DRAM Calculator for Ryzen™ 1.7.3 by 1usmus</h1>
                <div>
                    <button aria-label="Minimize"><svg width="8" height="8"><path d="M0 6h7v2H0z"/></svg></button>
                    <button aria-label="Maximize"><svg width="10" height="9" fill="none" stroke="#111"><path d="M.5 1h9v7.500h-9z"/><path d="M0 1h10" stroke-width="2"/></svg></button>
                    <button aria-label="Close"></button>
                </div>
            </header>
            <nav>${tabs.map(([name, width]) =>
                `<button class="${name === 'MEMbench' ? 'on' : ''}" style="width:${width}px">${name}</button>`).join('')}</nav>
            <main>
                <div class="left">
                    <group-box class="settings" label="Settings">
                        <div><label for="ram">RAM size (Mb)</label><input id="ram" type="text" value="6000" disabled></div>
                        <div><span>MEMbench mode</span><combo-box class="mode" arrow="solid" disabled label="MEMbench mode" value="Easy"></combo-box></div>
                        <div><span>Number of threads</span><combo-box arrow="solid" disabled label="Number of threads" value="12"></combo-box></div>
                        <div><label for="scope">Task scope (%)</label><input id="scope" type="text" value="15" disabled></div>
                        <div><span>Stop at (task mode)</span><combo-box arrow="solid" disabled label="Stop at" value="Total"></combo-box></div>
                        <div class="check"><input id="stop" type="checkbox" disabled><label for="stop">Stop on error</label></div>
                    </group-box>
                    <group-box label="Current Timings">
                        <div class="timings">
                            ${timings.map(row => {
                                const [a, b, c, d] = row.split('|');
                                return timing(a, b) + timing(c, d);
                            }).join('')}
                        </div>
                    </group-box>
                </div>
                <div class="list">
                    <table>
                        <colgroup><col style="width:57px"><col style="width:89px"><col style="width:61px"></colgroup>
                        <tr><th>Threads</th><th>Task scope (%)</th><th>Errors</th></tr>
                        ${scope.map((value, i) => `<tr><td>${i || 'All'}</td><td>${value}</td><td>0</td></tr>`).join('')}
                    </table>
                </div>
                <div class="right">
                    <group-box label="Results : Easy mode">
                        <div class="values">
                            <b>Time</b><em>106.24</em><b>Best time</b><em>104.8</em>
                            <span>Custom latency</span><i>59.4</i><span>Random latency</span><i>63.8</i>
                            <span>Read Speed (GB/s)</span><i>52.6</i><span>Write Speed (GB/s)</span><i>59.4</i>
                        </div>
                    </group-box>
                    <group-box label="Core Latency Results">
                        <div class="values core">
                            <span>Inner-CCX latency</span><i>38.4</i><span>Inter-CCX latency</span><i>108</i>
                        </div>
                    </group-box>
                    <result-chart></result-chart>
                    <div class="bottom">
                        <group-box label="System info">
                            <div class="info">
                                <div><span>User proxydark</span><span>Windows 10.0.19044</span></div>
                                <div>AMD Ryzen 5 2600X Six-Core Processor</div>
                                <div class="cores"><span>Cores 6</span><span>L3 Cache (KB)</span><span>16384</span></div>
                                <div>CRUCIAL BL8G32C16U4B.M8FE116GB</div>
                                <div>DRAM speed 3733 MHz</div>
                                <div><span>MEMbench 0.8 beta 4</span><span>08/26/2022 18:43:42</span></div>
                            </div>
                        </group-box>
                        <group-box label="Memory status">
                            <div class="status">
                                <span>PageFile (MB)</span><span>6400</span>
                                <span>Free Virtual (MB)</span><span>1784</span>
                                <span>Free Physical (MB)</span><span>14050</span>
                                <span>Total RAM (MB)</span><span>16300</span>
                            </div>
                        </group-box>
                    </div>
                </div>
            </main>
            <footer>
                <button class="tall run">Run</button>
                <button class="tall stop">Stop</button>
                <button class="tall draw">Draw<br>Latency Graph</button>
                <button>Max RAM</button>
                <button>Save result 1</button>
                <button class="tall light">Statistics</button>
                <button class="tall light">Screenshot</button>
                <button>Clear Standby</button>
                <button>Save result 2</button>
            </footer>
        `;
    }
}

/* ---------- AIDA64 Extreme ---------- */

class AidaExtreme extends BaseElement {
    render () {
        const tree = [
            ['monitor', 'Компьютер'], ['board', 'Системная плата'], ['windows', 'Операционная система'],
            ['server', 'Сервер'], ['monitor', 'Дисплей'], ['speaker', 'Мультимедиа'],
            ['disk', 'Хранение данных'], ['network', 'Сеть'], ['directx', 'DirectX']
        ];
        const tools = [
            ['play', 18, 'Старт'], ['page', 22, 'Отчёт'], ['download', 21, 'Обновления BIOS'],
            ['options', 23, 'Параметры'], ['results', 22, 'Результаты'], ['magnifier', 21, 'Обновления драйверов']
        ];
        // score, bar width in px, cpu, clock, board, chipset, memory, timings
        const rows = [
            [35548, 75, '32x Opteron 6274', 2200, 'Supermicro H8DGI-F', 'SR5690', 'Octal DDR3-1600R', '11-11-11-28 CR1'],
            [32142, 68, '6x Ryzen 5 2600X', 4100, 'Asus Prime X470-Pro', 'X470', 'Dual DDR4-3733', '14-19-14-42 CR1'],
            [30464, 64, '6x Core i7-6850K HT', 3600, 'Asus Strix X99 Gaming', 'X99', 'Quad DDR4-2400', '16-16-16-39 CR2'],
            [26627, 56, '6x Core i7-5820K HT', 3300, 'Gigabyte GA-X99-UD4', 'X99', 'Quad DDR4-2133', '15-15-15-36 CR2'],
            [24196, 51, '8x Ryzen 7 1800X HT', 3600, 'Asus Crosshair VI Hero', 'X370', 'Dual DDR4-2667', '16-17-17-35 CR1'],
            [23804, 51, '8x Ryzen 7 2700X HT', 3700, 'Asus Crosshair VII Hero', 'X470', 'Dual DDR4-2933', '16-20-21-49 CR1'],
            [23510, 50, '6x Core i7-4930K HT', 3400, 'Gigabyte GA-X79-UD3', 'X79', 'Quad DDR3-1866', '9-10-9-27 CR2'],
            [23423, 50, '6x Core i7-8700K HT', 3700, 'Gigabyte Z370 Aorus Gam...', 'Z370 Int.', 'Dual DDR4-2667', '16-18-18-38 CR2'],
            [23361, 50, '8x Core i9-11900K HT', 3500, 'Gigabyte Z590 Aorus Master', 'Z590 Int.', 'Dual DDR4-3200', '22-22-22-52 CR2']
        ];
        return `
            <style>
                :host { display: flex; flex-direction: column; background: #fff; overflow: hidden; }
                menu-bar { height: 19px; color: #666; border-bottom: 1px solid #e8e8e8; }
                .tools { display: flex; align-items: center; height: 31px; padding-left: 9px; white-space: nowrap; }
                .tools > button { width: 16px; height: 20px; margin-right: 15px; display: grid; place-items: center; }
                .tools > span { height: 27px; border-left: 2px dotted #bbb; margin-right: 12px; }
                .tools .named { width: auto; display: flex; align-items: center; gap: 7px; margin-right: 11px; }
                main { flex: 1; display: grid; grid-template-columns: 194px 1fr; min-height: 0; background: #f0f0f0; }
                .side { display: flex; flex-direction: column; min-height: 0; border-top: 1px solid #eee; }
                .tabs { display: flex; align-items: end; height: 22px; }
                .tabs button { height: 20px; width: 70px; border: 1px solid #d9d9d9; border-bottom: 0; }
                .tabs .on { height: 22px; width: 51px; background: #fff; border: 0; }
                ul { flex: 1; min-height: 0; overflow: hidden; margin: 0 7px 0 0; padding: 3px 0 0 7px; background: #fff; list-style: none; border-right: 1px solid #ddd; }
                li { display: flex; align-items: center; gap: 5px; height: 18px; }
                li svg:first-child:not(:only-child) + svg { margin-left: -2px; }
                .list { overflow: hidden; background: #fff; border: solid #8a8a8a; border-width: 1px 0 0 1px; }
                table { width: 100%; }
                th { height: 25px; border-right: 1px solid #e5e5e5; }
                td { height: 21px; }
                th, td { text-align: left; padding-left: 6px; }
                tr > :nth-child(2) { text-align: right; padding-right: 7px; }
                td:first-child { padding-left: 5px; }
                td div { display: flex; align-items: center; gap: 3px; }
                meter-bar { width: 128px; }
                .own { font-weight: 700; }
            </style>
            <title-bar label="AIDA64 Extreme" style="padding-left:8px">${icon('aida')}</title-bar>
            <menu-bar items="Файл|Вид|Отчёт|Избранное|Сервис|Справка"></menu-bar>
            <div class="tools">
                <button aria-label="Назад">${icon('back', 18)}</button>
                <button aria-label="Вперёд">${icon('forward', 18)}</button>
                <button aria-label="Вверх">${icon('up', 18)}</button>
                <button aria-label="Обновить">${icon('reload', 19)}</button>
                <button aria-label="Пользователи">${icon('users', 20)}</button>
                <button aria-label="График">${icon('graph', 20)}</button>
                <span></span>
                ${tools.map(([name, size, text]) => `<button class="named">${icon(name, size, 21)}${text}</button>`).join('')}
            </div>
            <main>
                <div class="side">
                    <div class="tabs"><button class="on">Меню</button><button>Избранное</button></div>
                    <ul>
                        <li>${icon('aida')}AIDA64 v6.70.6000</li>
                        ${tree.map(([name, text]) => `<li>${icon('chevron')}${icon(name)}${text}</li>`).join('')}
                    </ul>
                </div>
                <div class="list">
                    <table>
                        <colgroup>
                            <col style="width:276px"><col style="width:70px"><col style="width:160px">
                            <col style="width:100px"><col style="width:115px"><col>
                        </colgroup>
                        <tr><th>ЦП</th><th>Частота ...</th><th>Системная плата</th><th>Чипсет</th><th>Память</th><th>CL-RCD-RP-RAS</th></tr>
                        ${rows.map(([score, width, cpu, clock, ...rest]) => `
                            <tr class="${clock === 4100 ? 'own' : ''}">
                                <td><div><meter-bar value="${score}" fill="${width}" ${clock === 4100 ? 'own' : ''}></meter-bar>${cpu}</div></td>
                                <td>${clock} МГц</td>${rest.map(cell => `<td>${cell}</td>`).join('')}
                            </tr>`).join('')}
                    </table>
                </div>
            </main>
        `;
    }
}

class MeterBar extends BaseElement {
    render () {
        const color = this.hasAttribute('own') ? '#f6dc90' : '#a9d7fb';
        return `
            <style>
                :host {
                    display: block;
                    box-sizing: border-box;
                    height: 18px;
                    padding-left: 2px;
                    border: 1px solid #7a7a7a;
                    line-height: 16px;
                    font-weight: 400;
                    background: linear-gradient(${color}, ${color}) left / ${this.getAttribute('fill')}px 100% no-repeat;
                }
            </style>
            ${this.getAttribute('value')} Мпкс/с
        `;
    }
}

customElements.define('title-bar', TitleBar);
customElements.define('menu-bar', MenuBar);
customElements.define('group-box', GroupBox);
customElements.define('combo-box', ComboBox);
customElements.define('meter-bar', MeterBar);
customElements.define('result-chart', ResultChart);
customElements.define('zen-timings', ZenTimings);
customElements.define('note-pad', NotePad);
customElements.define('linx-window', LinxWindow);
customElements.define('cache-benchmark', CacheBenchmark);
customElements.define('test-dialog', TestDialog);
customElements.define('test-mem', TestMem);
customElements.define('dram-calculator', DramCalculator);
customElements.define('aida-extreme', AidaExtreme);
customElements.define('desk-top', DeskTop);
</script>
</body>
</html>
